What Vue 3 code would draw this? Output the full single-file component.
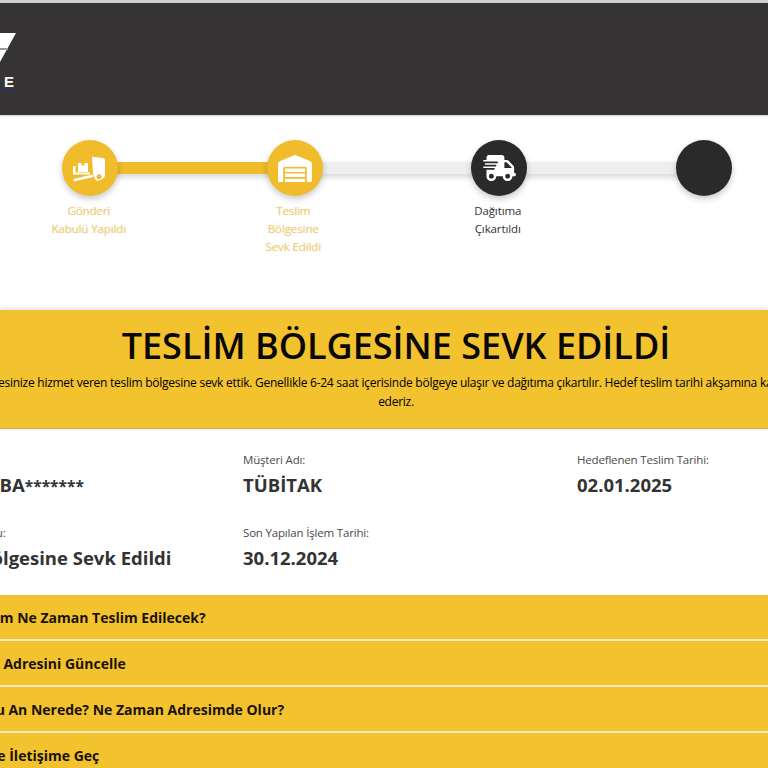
<script setup>
const steps = [
  { label: ['Gönderi', 'Kabulü Yapıldı'], done: true, icon: 'truck-hand', line: 'full' },
  { label: ['Teslim', 'Bölgesine', 'Sevk Edildi'], done: true, icon: 'warehouse', line: 'empty' },
  { label: ['Dağıtıma', 'Çıkartıldı'], done: false, icon: 'fast', line: 'empty' },
  { label: [], done: false, icon: '', line: '' }
]
const info = [
  [
    { k: 'Takip Numarası:', v: 'GÖNDERİBA', mask: '*******' },
    { k: 'Müşteri Adı:', v: 'TÜBİTAK' },
    { k: 'Hedeflenen Teslim Tarihi:', v: '02.01.2025' }
  ],
  [
    { k: 'Gönderi Durumu:', v: 'Teslim Bölgesine Sevk Edildi' },
    { k: 'Son Yapılan İşlem Tarihi:', v: '30.12.2024' }
  ]
]
const faqs = [
  'Gönderim Ne Zaman Teslim Edilecek?',
  'Gönderi Adresini Güncelle',
  'Paket Şu An Nerede? Ne Zaman Adresimde Olur?',
  'Kuryeyle İletişime Geç'
]
</script>

<template>
  <div class="page">
    <header class="top">
      <div class="logo">
        <svg class="mark" width="16" height="30" viewBox="0 0 16 30">
          <polygon points="0,0 16,0 0,29" fill="#fff" />
          <rect x="0" y="15" width="8" height="2" fill="#9b9a9a" />
        </svg>
        <span class="logo-text">E</span>
        <div class="logo-line"></div>
      </div>
    </header>

    <section class="stepper">
      <div v-for="(s, i) in steps" :key="i" class="step" :class="{ done: s.done }">
        <div v-if="s.line" class="bar" :class="s.line"></div>
        <div class="dot">
          <svg v-if="s.icon === 'truck-hand'" width="36" height="30" viewBox="72 150 36 30" fill="#fff">
            <path d="M92 153.8 L103 155 Q105 155.3 105 157.5 L105 171 Q105 175 101.5 176.5 L98 177.8 Q95.6 178 95 175.5 L93 171 Z M99 171.2a2.5 2.5 0 1 0 .01 0Z" fill-rule="evenodd" />
            <path d="M78 160 H81.5 V162.5 H84.5 V160 H88 V169 H78 Z" />
            <path d="M73 163 H75.5 V169.5 H90 V171.5 H73 Z" />
            <path d="M73.4 176 L92.5 171.6 L93.2 174 L74 178.6 Z" />
          </svg>
          <svg v-else-if="s.icon === 'warehouse'" width="34" height="27" viewBox="0 0 640 512" fill="#fff">
            <path d="M504 352H136.4c-4.4 0-8 3.6-8 8l-.1 48c0 4.4 3.6 8 8 8H504c4.4 0 8-3.6 8-8v-48c0-4.4-3.6-8-8-8zm0 96H136.1c-4.4 0-8 3.6-8 8l-.1 48c0 4.4 3.6 8 8 8h368c4.4 0 8-3.6 8-8v-48c0-4.4-3.6-8-8-8zm0-192H136.6c-4.4 0-8 3.6-8 8l-.1 48c0 4.4 3.6 8 8 8H504c4.4 0 8-3.6 8-8v-48c0-4.4-3.6-8-8-8zm106.5-139L338.4 3.7a48.15 48.15 0 0 0-36.9 0L29.5 117C11.7 124.5 0 141.9 0 161.3V504c0 4.4 3.6 8 8 8h80c4.4 0 8-3.6 8-8V256c0-17.6 14.6-32 32.6-32h382.8c18 0 32.6 14.4 32.6 32v248c0 4.4 3.6 8 8 8h80c4.4 0 8-3.6 8-8V161.3c0-19.4-11.7-36.8-29.5-44.3z" />
          </svg>
          <svg v-else-if="s.icon === 'fast'" width="33" height="26" viewBox="0 0 640 512" fill="#fff">
            <path d="M624 352h-16V243.9c0-12.7-5.1-24.9-14.1-33.9L494 110.1c-9-9-21.2-14.1-33.9-14.1H416V48c0-26.5-21.5-48-48-48H112C85.5 0 64 21.5 64 48v48H8c-4.4 0-8 3.6-8 8v16c0 4.4 3.6 8 8 8h272c4.4 0 8 3.6 8 8v16c0 4.4-3.6 8-8 8H40c-4.4 0-8 3.6-8 8v16c0 4.4 3.6 8 8 8h208c4.4 0 8 3.6 8 8v16c0 4.4-3.6 8-8 8H8c-4.4 0-8 3.6-8 8v16c0 4.4 3.6 8 8 8h208c4.4 0 8 3.6 8 8v16c0 4.4-3.6 8-8 8H64v128c0 53 43 96 96 96s96-43 96-96h128c0 53 43 96 96 96s96-43 96-96h48c8.8 0 16-7.2 16-16v-32c0-8.8-7.2-16-16-16zM160 464c-26.5 0-48-21.5-48-48s21.5-48 48-48 48 21.5 48 48-21.5 48-48 48zm320 0c-26.5 0-48-21.5-48-48s21.5-48 48-48 48 21.5 48 48-21.5 48-48 48zm80-208H416V144h44.1l99.9 99.9V256z" />
          </svg>
        </div>
        <div class="label">
          <div v-for="l in s.label" :key="l">{{ l }}</div>
        </div>
      </div>
    </section>

    <section class="banner">
      <h1>TESLİM BÖLGESİNE SEVK EDİLDİ</h1>
      <p class="lead">Paketi adresinize hizmet veren teslim bölgesine sevk ettik. Genellikle 6-24 saat içerisinde bölgeye ulaşır ve dağıtıma çıkartılır. Hedef teslim tarihi akşamına kadar teslim</p>
      <p>ederiz.</p>
    </section>

    <section class="info">
      <div v-for="(row, r) in info" :key="r" class="info-row">
        <div v-for="(c, n) in row" :key="c.k" class="cell" :class="{ first: n === 0 }">
          <div class="k">{{ c.k }}</div>
          <div class="v">{{ c.v }}<span v-if="c.mask" class="mask">{{ c.mask }}</span></div>
        </div>
      </div>
    </section>

    <section class="faq">
      <div v-for="f in faqs" :key="f" class="faq-row">{{ f }}</div>
    </section>
  </div>
</template>

<style>
html, body { margin: 0; background: #fff; overflow: hidden; }
</style>

<style scoped>
.page {
  width: 768px;
  height: 768px;
  overflow: hidden;
  background: #fff;
  font-family: "Open Sans", "Noto Sans", sans-serif;
  color: #212529;
}
.top {
  height: 112px;
  background: #353334;
  border-top: 3px solid #cfcfcf;
  box-shadow: 0 1px 2px rgba(0, 0, 0, .2);
  position: relative;
}
.logo { width: 16px; padding-top: 30px; display: flex; flex-direction: column; }
.mark { display: block; }
.logo-text {
  margin-top: 12px;
  align-self: flex-end;
  font: 700 15px/14px "Liberation Sans", sans-serif;
  color: #fff;
  letter-spacing: 1px;
  margin-right: 1px;
}
.logo-line { height: 5px; background: linear-gradient(#27354f, #3a3436); }

.stepper {
  height: 195px;
  display: flex;
  margin-left: -12px;
  padding-top: 25px;
  box-sizing: border-box;
}
.step {
  width: 204.5px;
  flex: none;
  display: flex;
  flex-direction: column;
  align-items: center;
  position: relative;
}
.dot {
  width: 56px;
  height: 56px;
  border-radius: 50%;
  background: #2b2a2a;
  display: flex;
  align-items: center;
  justify-content: center;
  box-shadow: 0 3px 6px rgba(0, 0, 0, .22);
  position: relative;
  z-index: 1;
}
.done .dot { background: #f0bc2c; }
.bar {
  position: absolute;
  top: 22px;
  left: 50%;
  width: 204.5px;
  height: 12px;
  background: #eeeeee;
  box-shadow: 0 3px 6px rgba(0, 0, 0, .16);
}
.bar.full { background: #f0bc2c; }
.label {
  margin-top: 6px;
  padding-right: 3px;
  font-size: 11.5px;
  line-height: 18px;
  width: 100px;
  text-align: center;
  color: #333;
  letter-spacing: -.1px;
}
.done .label { color: #eccf8a; text-shadow: 0 0 1px rgba(240, 188, 44, .5); }

.banner {
  height: 119px;
  box-sizing: border-box;
  background: #f2c22f;
  border-bottom: 1px solid #c9b15f;
  box-shadow: 0 -1px 5px rgba(0, 0, 0, .16);
  position: relative;
  display: flex;
  flex-direction: column;
  align-items: center;
  padding-top: 13px;
  padding-left: 24px;
  color: #000;
}
.banner h1 {
  margin: 0 0 5px;
  font-size: 36px;
  line-height: 46px;
  font-weight: 600;
  white-space: nowrap;
  color: #0a0805;
}
.banner p {
  margin: 0;
  font-size: 12px;
  line-height: 18.5px;
  white-space: nowrap;
  letter-spacing: -.26px;
}
.banner .lead { padding-right: 22px; }

.info { padding-top: 23px; height: 166px; box-sizing: border-box; margin-left: -86px; }
.info-row { display: flex; height: 73px; }
.cell { flex: none; width: 334px; }
.cell.first { width: 329px; }
.k { font-size: 11.5px; line-height: 16px; color: #4a4a4a; letter-spacing: -.18px; }
.v { margin-top: 5px; font-size: 18.5px; line-height: 24px; font-weight: 700; color: #333; white-space: nowrap; }
.mask { font-size: 15.5px; }

.faq { display: flex; flex-direction: column; gap: 2px; background: #f8ecc6; }
.faq-row {
  height: 44px;
  flex: none;
  background: #f2c22f;
  display: flex;
  align-items: center;
  font-size: 14px;
  font-weight: 700;
  color: #1a1205;
  text-indent: -56px;
  white-space: nowrap;
}
</style>
